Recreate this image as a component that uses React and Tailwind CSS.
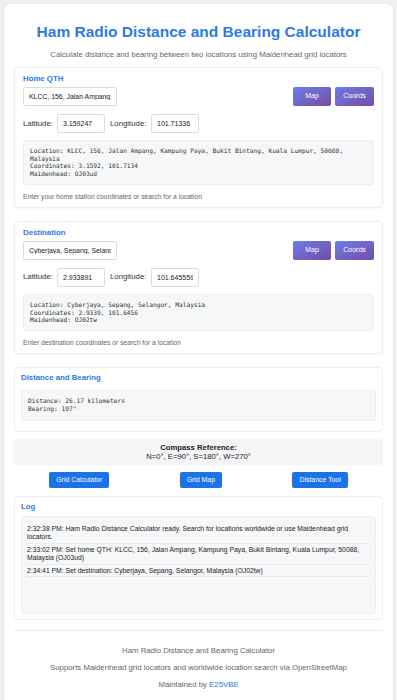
import React from "react";

const mono = { fontFamily: '"DejaVu Sans Mono", monospace' };

const LocationCard = ({ title, query, lat, lon, info, hint }) => (
  <div className="rounded-[4px] border border-[#eceef1] bg-white px-[8px] pt-[6px] pb-[6px] shadow-[0_1px_2px_rgba(0,0,0,0.04)]">
    <h3 className="text-[7.8px] leading-[10px] font-bold text-[#2b7be3] mb-[3px]">{title}</h3>
    <div className="flex items-center justify-between">
      <input
        readOnly
        value={query}
        className="w-[94px] h-[19px] rounded-[2px] border border-[#dcdcdc] bg-white px-[5px] text-[6.9px] text-[#222] outline-none"
      />
      <div className="flex gap-[4px]">
        <button className="w-[38px] h-[19px] rounded-[2px] bg-linear-to-br from-[#667eea] to-[#764ba2] text-white text-[7px]">
          Map
        </button>
        <button className="w-[39px] h-[19px] rounded-[2px] bg-linear-to-br from-[#667eea] to-[#764ba2] text-white text-[7px]">
          Coords
        </button>
      </div>
    </div>
    <div className="mt-[8px] flex items-center text-[7.8px] text-[#333]">
      <span className="w-[34px]">Latitude:</span>
      <input
        readOnly
        value={lat}
        className="w-[48px] h-[19px] rounded-[2px] border border-[#dcdcdc] bg-white px-[5px] text-[7px] text-[#222] outline-none"
      />
      <span className="ml-[5px] w-[41px]">Longitude:</span>
      <input
        readOnly
        value={lon}
        className="w-[48px] h-[19px] rounded-[2px] border border-[#dcdcdc] bg-white px-[5px] text-[7px] text-[#222] outline-none"
      />
    </div>
    <div
      className="mt-[7px] rounded-[3px] border border-[#eceef1] bg-[#f6f7f9] px-[6px] py-[6px] text-[6.2px] leading-[7.7px] text-[#333] whitespace-pre-wrap"
      style={mono}
    >
      {info}
    </div>
    <p className="mt-[7px] text-[6.75px] leading-[9px] text-[#666]">{hint}</p>
  </div>
);

const logs = [
  "2:32:38 PM: Ham Radio Distance Calculator ready. Search for locations worldwide or use Maidenhead grid locators.",
  "2:33:02 PM: Set home QTH: KLCC, 156, Jalan Ampang, Kampung Paya, Bukit Bintang, Kuala Lumpur, 50088, Malaysia (OJ03ud)",
  "2:34:41 PM: Set destination: Cyberjaya, Sepang, Selangor, Malaysia (OJ02tw)",
];

export default function App() {
  return (
    <div
      className="min-h-screen bg-[#eef0f4] p-[4px]"
      style={{ fontFamily: '"Liberation Sans", Arial, sans-serif' }}
    >
      <div className="rounded-[6px] bg-white px-[10px] pt-[18px] pb-[20px] shadow-[0_1px_4px_rgba(0,0,0,0.06)]">
        <h1 className="text-center text-[15.5px] leading-[19px] font-bold text-[#2b7be3]">
          Ham Radio Distance and Bearing Calculator
        </h1>
        <p className="mt-[9px] text-center text-[7.8px] leading-[9px] text-[#666]">
          Calculate distance and bearing between two locations using Maidenhead grid locators
        </p>

        <div className="mt-[8px] flex flex-col gap-[13px]">
          <LocationCard
            title="Home QTH"
            query="KLCC, 156, Jalan Ampang, Kampung Paya"
            lat="3.159247"
            lon="101.71336"
            info={"Location: KLCC, 156, Jalan Ampang, Kampung Paya, Bukit Bintang, Kuala Lumpur, 50088, Malaysia\nCoordinates: 3.1592, 101.7134\nMaidenhead: OJ03ud"}
            hint="Enter your home station coordinates or search for a location"
          />
          <LocationCard
            title="Destination"
            query="Cyberjaya, Sepang, Selangor, Malaysia"
            lat="2.933891"
            lon="101.645559"
            info={"Location: Cyberjaya, Sepang, Selangor, Malaysia\nCoordinates: 2.9339, 101.6456\nMaidenhead: OJ02tw"}
            hint="Enter destination coordinates or search for a location"
          />
        </div>

        <div className="mt-[13px] rounded-[4px] border border-[#eceef1] bg-white px-[6px] pt-[5px] pb-[10px]">
          <h3 className="text-[7.8px] leading-[10px] font-bold text-[#2b7be3]">Distance and Bearing</h3>
          <div
            className="mt-[7px] rounded-[3px] border border-[#eceef1] bg-[#f6f7f9] px-[6px] py-[6px] text-[6.2px] leading-[8.5px] text-[#333] whitespace-pre-wrap"
            style={mono}
          >
            {"Distance: 26.17 kilometers\nBearing: 197°"}
          </div>
        </div>

        <div className="mt-[7px] rounded-[3px] bg-[#f4f5f7] py-[4px] text-center text-[7.7px] leading-[9px] text-[#222]">
          <div className="font-bold">Compass Reference:</div>
          <div>N=0°, E=90°, S=180°, W=270°</div>
        </div>

        <div className="mt-[7px] flex justify-around">
          {["Grid Calculator", "Grid Map", "Distance Tool"].map((b) => (
            <button
              key={b}
              className="h-[16.5px] rounded-[2px] bg-[#1a73e8] px-[7px] text-[6.9px] text-white"
            >
              {b}
            </button>
          ))}
        </div>

        <div className="mt-[8px] rounded-[4px] border border-[#eceef1] bg-white px-[6px] pt-[5px] pb-[5px]">
          <h3 className="text-[7.8px] leading-[10px] font-bold text-[#2b7be3]">Log</h3>
          <div className="mt-[4px] h-[98px] rounded-[3px] border border-[#eceef1] bg-[#f6f7f9] px-[5px] pt-[6px] text-[6.8px] leading-[7.8px] text-[#222]">
            {logs.map((l, i) => (
              <div key={i} className="border-b border-[#e8eaed] py-[2px]">
                {l}
              </div>
            ))}
          </div>
        </div>

        <div className="mt-[10px] border-t border-[#e8eaed] pt-[15px] text-center text-[7.8px] leading-[9px] text-[#666]">
          <p>Ham Radio Distance and Bearing Calculator</p>
          <p className="mt-[8px]">
            Supports Maidenhead grid locators and worldwide location search via OpenStreetMap
          </p>
          <p className="mt-[8px]">
            Maintained by <a className="text-[#1a73e8]">E25VBE</a>
          </p>
        </div>
      </div>
    </div>
  );
}
